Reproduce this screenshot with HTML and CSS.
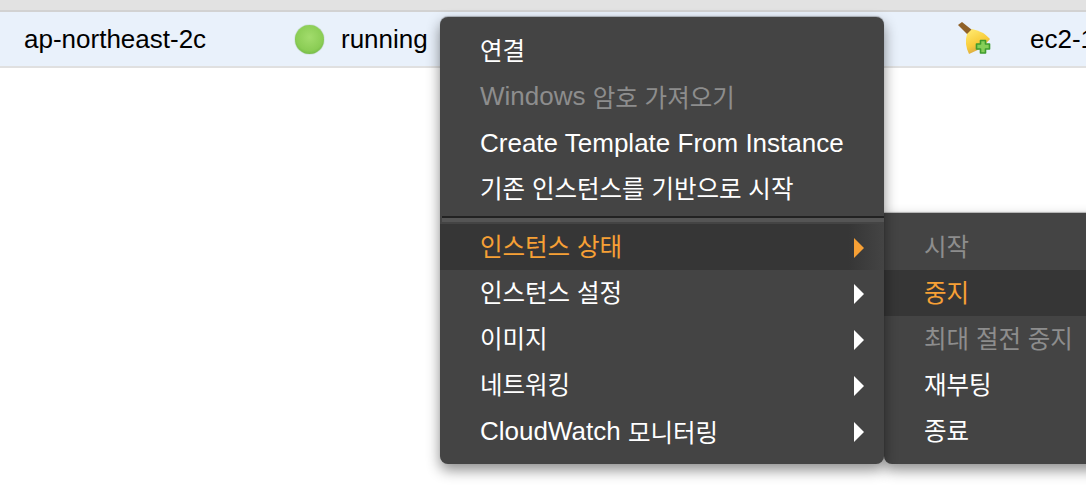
FILE: index.html
```html
<!DOCTYPE html>
<html lang="ko">
<head>
<meta charset="utf-8">
<title>EC2 인스턴스</title>
<link rel="stylesheet" href="styles.css">
</head>
<body>
<div class="topbar"></div>
<div class="row">
  <div class="cell zone">ap-northeast-2c</div>
  <div class="cell state">
    <span class="dot"></span>
    <span>running</span>
  </div>
  <div class="cell broom">
    <svg width="34" height="34" viewBox="0 0 34 34">
      <defs>
        <linearGradient id="bristle" x1="0.2" y1="0" x2="0.7" y2="1">
          <stop offset="0" stop-color="#ffe96e"/>
          <stop offset="0.55" stop-color="#f8cc3a"/>
          <stop offset="1" stop-color="#c6964a"/>
        </linearGradient>
      </defs>
      <path d="M0 3 L4 0 L14 8 L10 13 Z" fill="#8f6128"/>
      <path d="M9 12 L14 7 Q25 9 32 17 L24 26 L11 32 Q6 22 9 12 Z" fill="url(#bristle)"/>
      <path d="M22.5 18.5 H27.5 V22 H31.5 V27 H27.5 V31 H22.5 V27 H18.5 V22 H22.5 Z" fill="#86cf58" stroke="#3f9c2e" stroke-width="1.6" stroke-linejoin="round"/>
    </svg>
  </div>
  <div class="cell host">ec2-13-125-1</div>
</div>

<div class="menu main-menu">
  <div class="item ko">연결</div>
  <div class="item off"><span class="latin">Windows&nbsp;</span>암호 가져오기</div>
  <div class="item tpl"><span class="latin">Create Template From Instance</span></div>
  <div class="item ko">기존 인스턴스를 기반으로 시작</div>
  <div class="divider"></div>
  <div class="item active">인스턴스 상태<span class="arrow"></span></div>
  <div class="item">인스턴스 설정<span class="arrow"></span></div>
  <div class="item">이미지<span class="arrow"></span></div>
  <div class="item">네트워킹<span class="arrow"></span></div>
  <div class="item cw"><span class="latin">CloudWatch&nbsp;</span>모니터링<span class="arrow"></span></div>
</div>

<div class="menu sub-menu">
  <div class="item off">시작</div>
  <div class="item active">중지</div>
  <div class="item off">최대 절전 중지</div>
  <div class="item">재부팅</div>
  <div class="item">종료</div>
</div>
</body>
</html>
```
FILE: styles.css
```css
* { box-sizing: border-box; }
html, body { margin: 0; height: 100%; overflow: hidden; }
body {
  position: relative;
  background: #fff;
  font-family: "Liberation Sans", "Noto Sans CJK KR", sans-serif;
  color: #000;
}
.topbar {
  height: 12px;
  background: #e2e2e2;
  border-bottom: 2px solid #d2d2d2;
}
.row {
  display: flex;
  align-items: center;
  height: 56px;
  background: #e9f1fb;
  border-bottom: 2px solid #e0e0e0;
  font-size: 26px;
  overflow: hidden;
}
.cell { display: flex; flex: none; align-items: center; white-space: nowrap; }
.zone { width: 295px; padding-left: 24px; }
.state { width: 663px; gap: 17px; }
.dot {
  width: 29px;
  height: 29px;
  border-radius: 50%;
  background: radial-gradient(circle at 50% 42%, #a2dc6c 0, #8bcd55 60%, #5aa535 100%);
  box-shadow: 0 0 1px #4d8f2e;
}
.broom { width: 72px; }
.broom svg { display: block; }
.menu {
  position: absolute;
  background: #444;
  color: #fff;
  font-size: 24.5px;
  box-shadow: 0 -1px 1px rgba(0, 0, 0, .25), 0 6px 14px rgba(0, 0, 0, .45);
}
.main-menu {
  left: 440px;
  top: 17px;
  width: 444px;
  height: 447px;
  padding-top: 10px;
  border-radius: 8px;
  z-index: 2;
}
.sub-menu {
  left: 884px;
  top: 213px;
  width: 240px;
  height: 251px;
  padding-top: 11px;
  border-radius: 0 0 0 8px;
  z-index: 1;
}
.item {
  position: relative;
  display: flex;
  align-items: center;
  height: 46px;
  padding-left: 40px;
  white-space: nowrap;
}
.item.ko { padding-bottom: 2px; }
.item.tpl { padding-top: 2px; }
.divider ~ .item, .sub-menu .item { padding-bottom: 3px; }
.divider ~ .item.cw { padding-bottom: 0; }
.latin { font-size: 26px; }
.off { color: #8d8d8d; }
.active { background: #363636; color: #f7a035; }
.main-menu .active { background: linear-gradient(to right, #363636 92%, #444 100%); }
.divider {
  height: 6px;
  margin: 5px 0 2px 2px;
  border-top: 2px solid #222;
  background: #555;
}
.arrow {
  position: absolute;
  right: 20px;
  top: 14px;
  width: 0;
  height: 0;
  border-left: 10px solid #fff;
  border-top: 10px solid transparent;
  border-bottom: 10px solid transparent;
}
.active .arrow { border-left-color: #f7a035; }
```
